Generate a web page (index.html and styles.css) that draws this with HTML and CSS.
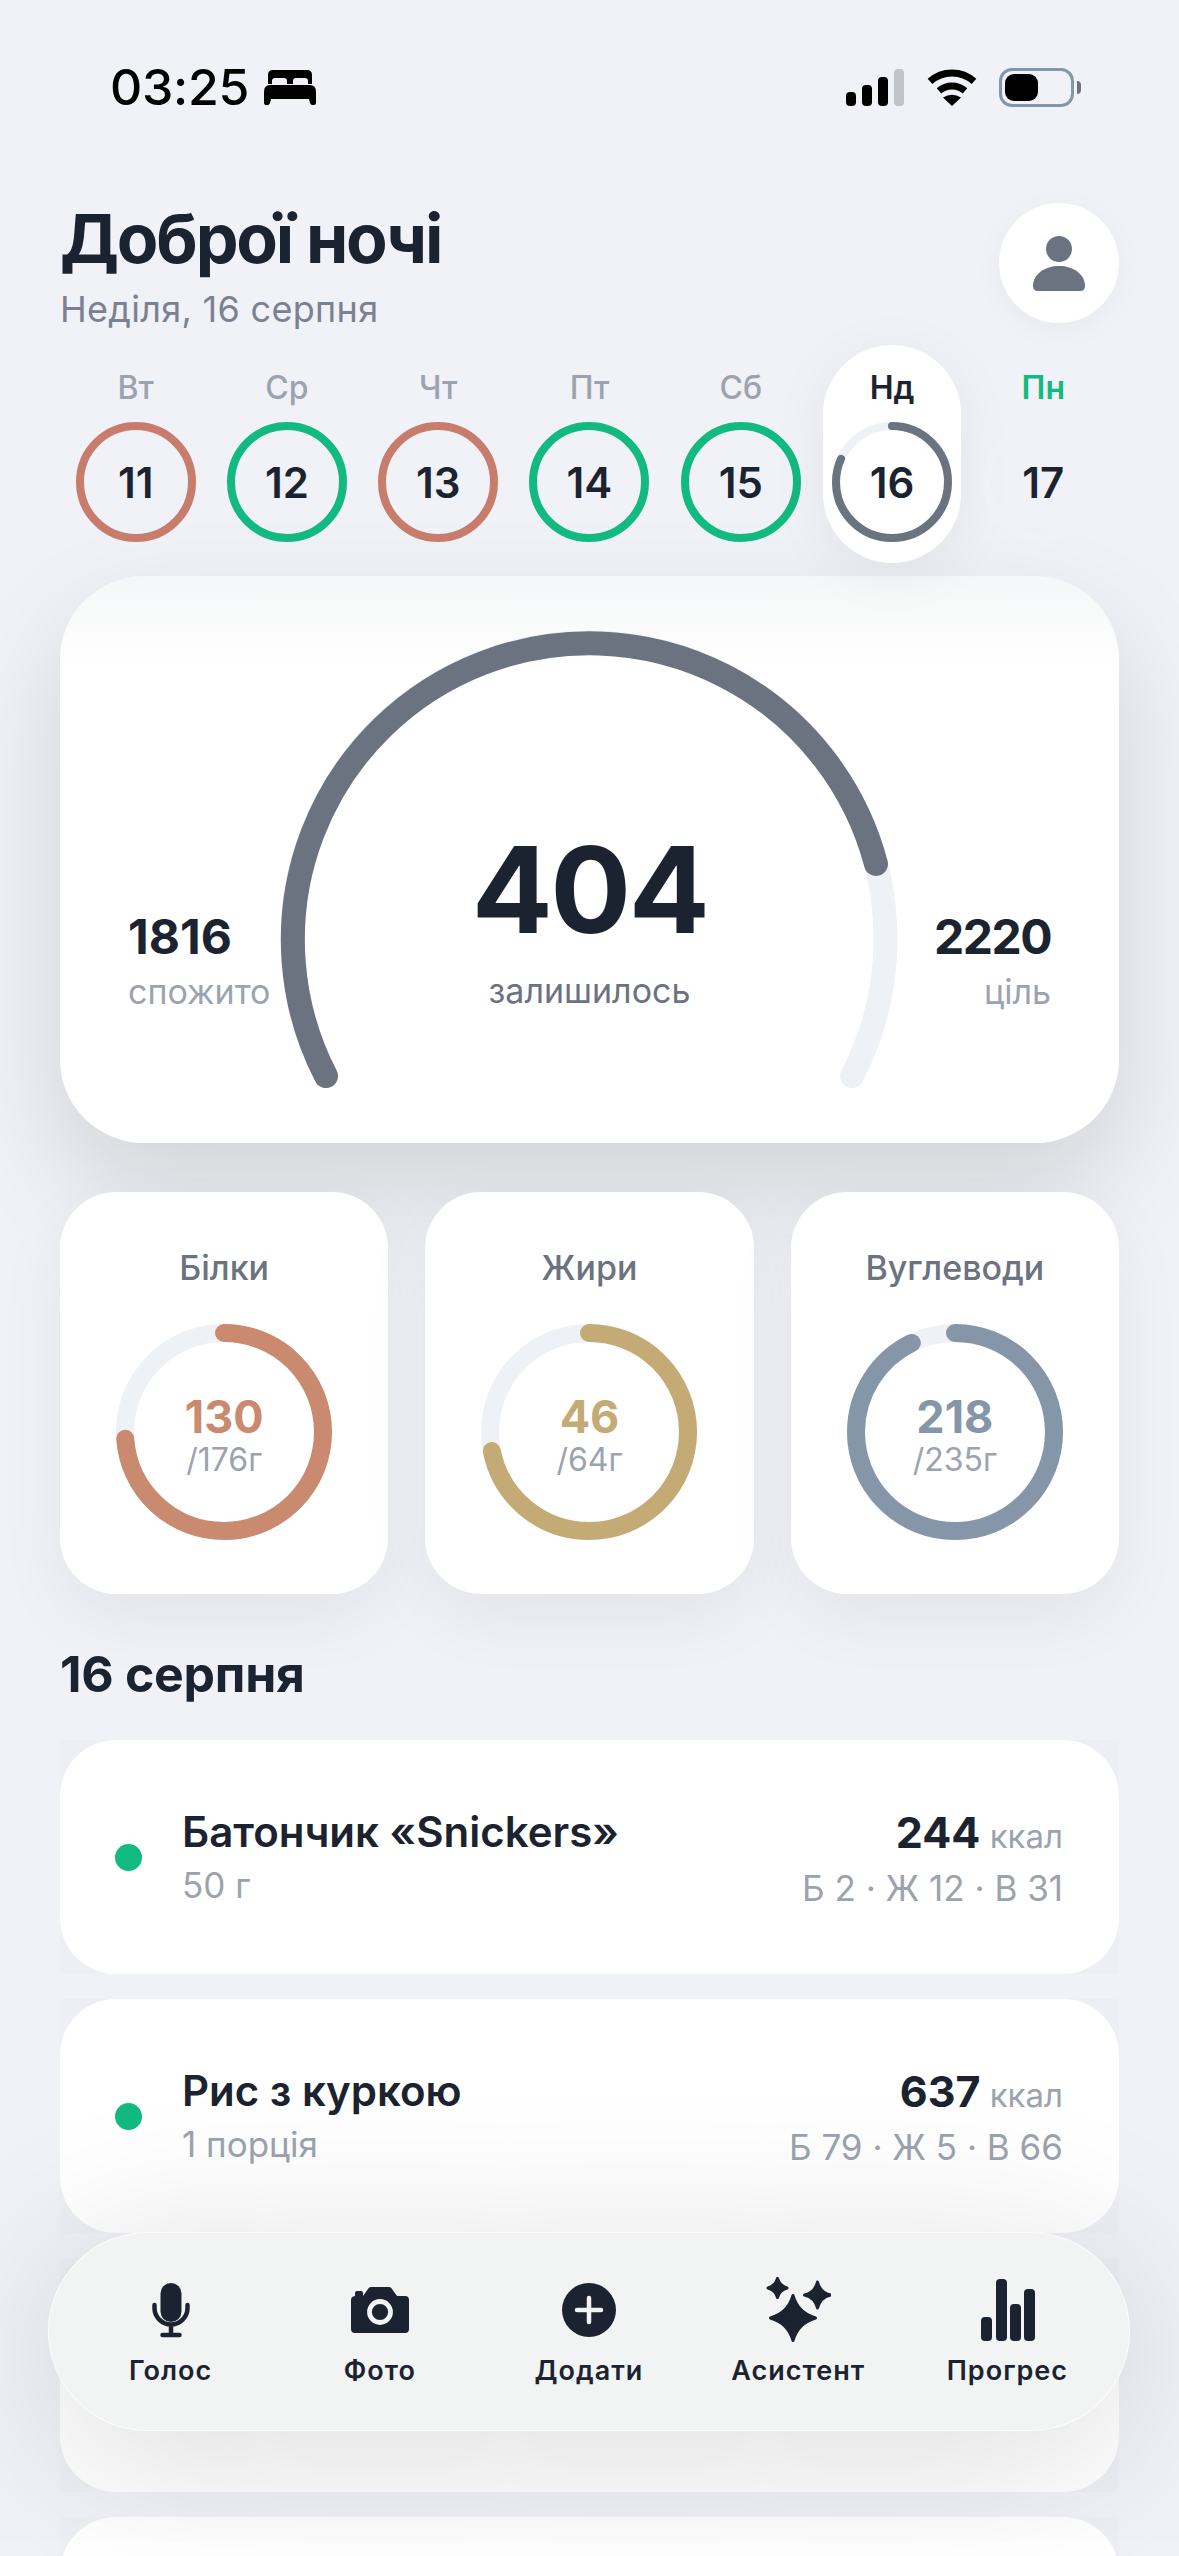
FILE: index.html
```html
<!DOCTYPE html>
<html lang="uk">
<head>
    <meta charset="UTF-8">
    <meta name="viewport" content="width=device-width, initial-scale=1.0">
    <title>Доброї ночі</title>
    <link rel="stylesheet" href="styles.css">
</head>
<body>
    <div class="status">
        <div class="status-left">
            <span class="time">03:25</span>
            <svg class="bed" width="52" height="35" viewBox="0 0 52 35"><path d="M9 0h34q5 0 5 5v9h-4v-3q0-3-3-3H32q-3 0-3 3v3h-6v-3q0-3-3-3H11q-3 0-3 3v3H4V5q0-5 5-5z"/><path d="M6 15h40q6 0 6 7v11q0 2-2 2h-2q-1 0-2-2l-1-4H7l-1 4q-1 2-2 2H2q-2 0-2-2V22q0-7 6-7z"/></svg>
        </div>
        <div class="status-right">
            <div class="signal">
                <span class="bar bar-1"></span>
                <span class="bar bar-2"></span>
                <span class="bar bar-3"></span>
                <span class="bar bar-4"></span>
            </div>
            <svg width="50" height="37" viewBox="0 0 50 37"><path d="M3 12.4A33 33 0 0 1 47 12.4M12 21.8A20 20 0 0 1 38 21.8" fill="none" stroke="#000" stroke-width="7"/><path d="M25 37L16 28.5Q25 23 34 28.5Z"/></svg>
            <div class="battery"><span class="battery-fill"></span></div>
            <span class="battery-nub"></span>
        </div>
    </div>

    <div class="head">
        <div>
            <h1>Доброї ночі</h1>
            <div class="date">Неділя, 16 серпня</div>
        </div>
        <div class="avatar">
            <svg width="52" height="55" viewBox="0 0 52 55"><circle cx="26" cy="13" r="13"/><path d="M0 50C0 38 12 30 26 30S52 38 52 50Q52 55 47 55H5Q0 55 0 50Z"/></svg>
        </div>
    </div>

    <div class="days">
        <div class="day">
            <span class="day-name">Вт</span>
            <div class="day-ring ring-red"><span>11</span></div>
        </div>
        <div class="day">
            <span class="day-name">Ср</span>
            <div class="day-ring ring-green"><span>12</span></div>
        </div>
        <div class="day">
            <span class="day-name">Чт</span>
            <div class="day-ring ring-red"><span>13</span></div>
        </div>
        <div class="day">
            <span class="day-name">Пт</span>
            <div class="day-ring ring-green"><span>14</span></div>
        </div>
        <div class="day">
            <span class="day-name">Сб</span>
            <div class="day-ring ring-green"><span>15</span></div>
        </div>
        <div class="day day-today">
            <span class="day-name">Нд</span>
            <div class="day-ring">
                <svg width="120" height="120" viewBox="0 0 120 120">
                    <circle cx="60" cy="60" r="56" fill="none" stroke="#eef1f6" stroke-width="8"/>
                    <circle cx="60" cy="60" r="56" fill="none" stroke="#6b7280" stroke-width="8" stroke-linecap="round" pathLength="100" stroke-dasharray="81.8 100" transform="rotate(-90 60 60)"/>
                </svg>
                <span>16</span>
            </div>
        </div>
        <div class="day day-next">
            <span class="day-name">Пн</span>
            <div class="day-ring ring-empty"><span>17</span></div>
        </div>
    </div>

    <div class="gauge-card">
        <svg class="gauge" width="1059" height="567" viewBox="0 0 1059 567">
            <path d="M266 500A296.5 296.5 0 1 1 792 500" fill="none" stroke="#eef1f6" stroke-width="24" stroke-linecap="round"/>
            <path d="M266 500A296.5 296.5 0 1 1 816 288" fill="none" stroke="#6b7280" stroke-width="24" stroke-linecap="round"/>
        </svg>
        <div class="gauge-text">
            <div class="gauge-side">
                <div class="side-num">1816</div>
                <div class="side-label">спожито</div>
            </div>
            <div class="gauge-center">
                <div class="left-num">404</div>
                <div class="left-label">залишилось</div>
            </div>
            <div class="gauge-side side-right">
                <div class="side-num">2220</div>
                <div class="side-label">ціль</div>
            </div>
        </div>
    </div>

    <div class="macros">
        <div class="macro">
            <div class="macro-title">Білки</div>
            <div class="macro-ring">
                <svg width="216" height="216" viewBox="0 0 216 216">
                    <circle cx="108" cy="108" r="99" fill="none" stroke="#eef1f6" stroke-width="18"/>
                    <circle cx="108" cy="108" r="99" fill="none" stroke="#c98a70" stroke-width="18" stroke-linecap="round" pathLength="100" stroke-dasharray="73.9 100" transform="rotate(-90 108 108)"/>
                </svg>
                <div class="macro-value">
                    <div class="macro-num protein">130</div>
                    <div class="macro-goal">/176г</div>
                </div>
            </div>
        </div>
        <div class="macro">
            <div class="macro-title">Жири</div>
            <div class="macro-ring">
                <svg width="216" height="216" viewBox="0 0 216 216">
                    <circle cx="108" cy="108" r="99" fill="none" stroke="#eef1f6" stroke-width="18"/>
                    <circle cx="108" cy="108" r="99" fill="none" stroke="#c4aa74" stroke-width="18" stroke-linecap="round" pathLength="100" stroke-dasharray="71.9 100" transform="rotate(-90 108 108)"/>
                </svg>
                <div class="macro-value">
                    <div class="macro-num fat">46</div>
                    <div class="macro-goal">/64г</div>
                </div>
            </div>
        </div>
        <div class="macro">
            <div class="macro-title">Вуглеводи</div>
            <div class="macro-ring">
                <svg width="216" height="216" viewBox="0 0 216 216">
                    <circle cx="108" cy="108" r="99" fill="none" stroke="#eef1f6" stroke-width="18"/>
                    <circle cx="108" cy="108" r="99" fill="none" stroke="#8596a8" stroke-width="18" stroke-linecap="round" pathLength="100" stroke-dasharray="92.8 100" transform="rotate(-90 108 108)"/>
                </svg>
                <div class="macro-value">
                    <div class="macro-num carbs">218</div>
                    <div class="macro-goal">/235г</div>
                </div>
            </div>
        </div>
    </div>

    <h2>16 серпня</h2>

    <div class="meals">
        <div class="meal-slot">
            <div class="meal">
                <span class="dot"></span>
                <div class="meal-info">
                    <div class="meal-name">Батончик «Snickers»</div>
                    <div class="meal-sub">50 г</div>
                </div>
                <div class="meal-nums">
                    <div class="meal-kcal"><b>244</b> <span>ккал</span></div>
                    <div class="meal-sub">Б 2 · Ж 12 · В 31</div>
                </div>
            </div>
        </div>
        <div class="meal-slot">
            <div class="meal">
                <span class="dot"></span>
                <div class="meal-info">
                    <div class="meal-name">Рис з куркою</div>
                    <div class="meal-sub">1 порція</div>
                </div>
                <div class="meal-nums">
                    <div class="meal-kcal"><b>637</b> <span>ккал</span></div>
                    <div class="meal-sub">Б 79 · Ж 5 · В 66</div>
                </div>
            </div>
        </div>
        <div class="meal-slot"><div class="meal"></div></div>
        <div class="meal-slot"><div class="meal"></div></div>
    </div>

    <nav class="tabbar">
        <div class="tab">
            <svg width="66" height="66" viewBox="0 0 66 66">
                <rect x="22.5" y="6" width="21" height="39" rx="10.5"/>
                <path d="M16.5 28v3a16.5 16.5 0 0 0 33 0v-3M33 48v10M24.5 58h17" fill="none" stroke="#1c2330" stroke-width="4.5" stroke-linecap="round"/>
            </svg>
            <span>Голос</span>
        </div>
        <div class="tab">
            <svg width="66" height="66" viewBox="0 0 66 66">
                <rect x="8" y="14" width="8" height="8" rx="2"/>
                <path d="M9 19h7l5-7q1-2 3-2h18q2 0 3 2l5 7h8q4 0 4 4v29q0 4-4 4H8q-4 0-4-4V23q0-4 5-4Z"/>
                <circle cx="33" cy="35" r="10.5" fill="none" stroke="#f2f4f4" stroke-width="4.8"/>
            </svg>
            <span>Фото</span>
        </div>
        <div class="tab">
            <svg width="66" height="66" viewBox="0 0 66 66">
                <circle cx="33" cy="33" r="27"/>
                <path d="M33 21v24M21 33h24" fill="none" stroke="#f2f4f4" stroke-width="4.5" stroke-linecap="round"/>
            </svg>
            <span>Додати</span>
        </div>
        <div class="tab">
            <svg width="66" height="66" viewBox="0 0 66 66" stroke="#1c2330" stroke-width="3" stroke-linejoin="round">
                <path d="M28 18.500Q33 36 50.500 41Q33 46 28 63.500Q23 46 5.500 41Q23 36 28 18.500Z"/>
                <path d="M12.500 1.500Q14.500 9 22 11Q14.500 13 12.500 20.500Q10.500 13 3 11Q10.500 9 12.500 1.500Z"/>
                <path d="M52.500 5Q55 15.500 65.500 18Q55 20.500 52.500 31Q50 20.500 39.500 18Q50 15.500 52.500 5Z"/>
            </svg>
            <span>Асистент</span>
        </div>
        <div class="tab">
            <svg width="66" height="66" viewBox="0 0 66 66">
                <rect x="7" y="40" width="11" height="24" rx="4"/>
                <rect x="22" y="2" width="11" height="62" rx="4"/>
                <rect x="36" y="27" width="11" height="37" rx="4"/>
                <rect x="50" y="12" width="11" height="52" rx="4"/>
            </svg>
            <span>Прогрес</span>
        </div>
    </nav>
</body>
</html>
```

FILE: styles.css
```css
* {
    box-sizing: border-box;
}
body {
    position: relative;
    width: 1179px;
    height: 2556px;
    margin: 0;
    padding: 68px 60px 0;
    overflow: hidden;
    font-family: Inter, "Noto Sans", sans-serif;
    background-color: #f0f2f7;
    color: #1c2330;
}

/* status bar */
.status {
    display: flex;
    justify-content: space-between;
    align-items: center;
    height: 39px;
    margin-right: 38px;
    padding-left: 50px;
}
.status-left {
    display: flex;
    align-items: center;
    gap: 15px;
}
.time {
    font-size: 50px;
    line-height: 39px;
    font-weight: 500;
    letter-spacing: -0.3px;
    color: #000;
}
.status-right {
    display: flex;
    align-items: center;
}
.signal {
    display: flex;
    align-items: flex-end;
    gap: 6px;
    height: 37px;
    margin-right: 23px;
}
.bar {
    width: 10px;
    border-radius: 4px;
    background-color: #000;
}
.bar-1 { height: 14px; }
.bar-2 { height: 21px; }
.bar-3 { height: 29px; }
.bar-4 { height: 37px; background-color: #c0c4c8; }
.battery {
    width: 75px;
    height: 39px;
    margin-left: 22px;
    padding: 3px;
    border: 3px solid #8496a9;
    border-radius: 13px;
}
.battery-fill {
    display: block;
    width: 33px;
    height: 27px;
    border-radius: 9px;
    background-color: #000;
}
.battery-nub {
    width: 4px;
    height: 13px;
    margin-left: 3px;
    border-radius: 0 4px 4px 0;
    background-color: #6b7280;
}

/* greeting */
.head {
    display: flex;
    justify-content: space-between;
    height: 120px;
    margin-top: 96px;
}
h1 {
    margin: -1px 0 0;
    font-size: 68px;
    line-height: 72px;
    font-weight: 700;
    letter-spacing: -2.2px;
}
.date {
    margin-top: 15px;
    font-size: 36px;
    line-height: 40px;
    letter-spacing: 0.3px;
    color: #7a8291;
}
.avatar {
    display: flex;
    align-items: center;
    justify-content: center;
    width: 120px;
    height: 120px;
    border-radius: 50%;
    background-color: #fff;
    box-shadow: 0 6px 30px rgba(0, 0, 0, 0.04);
}
.avatar svg {
    fill: #6b7280;
}

/* week strip */
.days {
    display: grid;
    grid-template-columns: repeat(7, 1fr);
    margin-top: 22px;
}
.day {
    display: flex;
    flex-direction: column;
    align-items: center;
    width: 138px;
    height: 218px;
    justify-self: center;
    padding-top: 23px;
    border-radius: 69px;
}
.day-name {
    height: 54px;
    font-size: 32px;
    line-height: 40px;
    font-weight: 500;
    color: #9ca3af;
}
.day-today {
    background-color: #fff;
    box-shadow: 0 10px 60px rgba(0, 0, 0, 0.06);
}
.day-today .day-name {
    font-weight: 600;
    color: #1c2330;
}
.day-next .day-name {
    font-weight: 600;
    color: #12b981;
}
.day-ring {
    display: grid;
    place-items: center;
    width: 120px;
    height: 120px;
    border-radius: 50%;
    font-size: 42px;
    font-weight: 600;
}
.day-ring > * {
    grid-area: 1 / 1;
}
.ring-red {
    border: 8px solid #c87c6c;
}
.ring-green {
    border: 8px solid #12b981;
}
.ring-empty {
    border: 8px solid #f0f2f7;
}

/* calories gauge */
.gauge-card {
    display: grid;
    height: 567px;
    margin-top: 13px;
    border-radius: 84px;
    background: linear-gradient(#f5f6f7, #fff 16%);
    box-shadow: 0 46px 110px rgba(0, 0, 0, 0.13);
}
.gauge,
.gauge-text {
    grid-area: 1 / 1;
}
.gauge-text {
    display: grid;
    grid-template-columns: 1fr auto 1fr;
    padding: 0 68px;
}
.gauge-side {
    padding-top: 334px;
}
.side-right {
    text-align: right;
}
.side-right .side-num {
    letter-spacing: -1.5px;
}
.side-num {
    font-size: 48px;
    line-height: 54px;
    font-weight: 700;
}
.side-label {
    margin-top: 8px;
    font-size: 34px;
    line-height: 40px;
    color: #9ca3af;
}
.gauge-center {
    padding-top: 247px;
    text-align: center;
}
.left-num {
    font-size: 120px;
    line-height: 134px;
    font-weight: 700;
    letter-spacing: -2.5px;
}
.left-label {
    margin-top: 14px;
    font-size: 34px;
    line-height: 40px;
    color: #6b7280;
}

/* macros */
.macros {
    display: grid;
    grid-template-columns: repeat(3, 1fr);
    gap: 37px;
    margin-top: 49px;
}
.macro {
    display: flex;
    flex-direction: column;
    align-items: center;
    height: 402px;
    padding-top: 56px;
    border-radius: 56px;
    background-color: #fff;
    box-shadow: 0 24px 70px rgba(0, 0, 0, 0.06);
}
.macro-title {
    height: 76px;
    font-size: 34px;
    line-height: 40px;
    font-weight: 500;
    color: #6b7280;
}
.macro-ring {
    display: grid;
    place-items: center;
    width: 216px;
    height: 216px;
}
.macro-ring > * {
    grid-area: 1 / 1;
}
.macro-value {
    padding-top: 5px;
    text-align: center;
}
.macro-num {
    font-size: 45px;
    line-height: 50px;
    font-weight: 700;
}
.macro-goal {
    font-size: 32px;
    line-height: 36px;
    color: #9ca3af;
}
.protein { color: #c98a70; }
.fat { color: #c4aa74; }
.carbs { color: #8596a8; }

/* meals */
h2 {
    margin: 52px 0 0;
    font-size: 50px;
    line-height: 56px;
    font-weight: 700;
    letter-spacing: -0.3px;
}
.meals {
    display: flex;
    flex-direction: column;
    gap: 25px;
    margin-top: 38px;
}
.meal-slot {
    flex: none;
    height: 234px;
    background-color: rgba(0, 0, 0, 0.01);
}
.meal {
    display: flex;
    align-items: center;
    height: 100%;
    padding: 0 56px 0 55px;
    border-radius: 56px;
    background-color: #fff;
}
.dot {
    width: 27px;
    height: 27px;
    border-radius: 50%;
    background-color: #12b981;
}
.meal-info {
    flex: 1;
    margin-left: 40px;
}
.meal-name {
    font-size: 42px;
    line-height: 50px;
    font-weight: 600;
}
.meal-sub {
    margin-top: 6px;
    font-size: 35px;
    line-height: 44px;
    color: #9ca3af;
}
.meal-nums {
    text-align: right;
}
.meal-kcal {
    padding-top: 3px;
    font-size: 33px;
    line-height: 48px;
    color: #9ca3af;
}
.meal-kcal b {
    font-size: 43px;
    font-weight: 700;
    color: #1c2330;
}

/* bottom bar */
.tabbar {
    position: absolute;
    left: 48px;
    bottom: 125px;
    display: grid;
    grid-template-columns: repeat(5, 1fr);
    width: 1082px;
    height: 199px;
    padding: 44px 17px 0;
    border: 1px solid rgba(255, 255, 255, 0.8);
    border-radius: 100px;
    background-color: #f2f4f4;
    box-shadow: 0 24px 170px rgba(0, 0, 0, 0.15);
}
.tab {
    display: flex;
    flex-direction: column;
    align-items: center;
    gap: 11px;
    font-size: 27px;
    line-height: 34px;
    font-weight: 600;
    letter-spacing: 1px;
}
.tab svg {
    fill: #1c2330;
}
```
